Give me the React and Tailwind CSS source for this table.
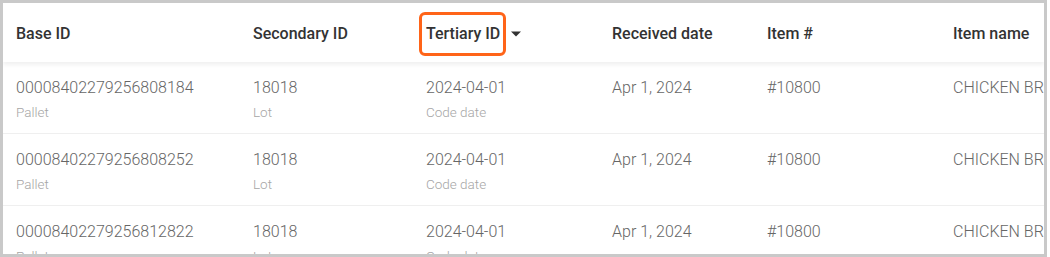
const columns = [
  { label: "Base ID", width: "w-[237px]" },
  { label: "Secondary ID", width: "w-[173px]" },
  { label: "Tertiary ID", width: "w-[186px]", sorted: true },
  { label: "Received date", width: "w-[155px]" },
  { label: "Item #", width: "w-[186px]" },
  { label: "Item name", width: "w-[200px]" },
];

const rows = [
  { base: "00008402279256808184" },
  { base: "00008402279256808252" },
  { base: "00008402279256812822" },
];

const Cell = ({ width, main, sub }) => (
  <div className={`${width} shrink-0 flex flex-col`}>
    <span className="text-[16px] leading-5 text-[#666] font-light whitespace-nowrap">{main}</span>
    {sub && <span className="mt-[4px] text-[13.5px] leading-5 text-[#a6a6a6] font-light">{sub}</span>}
  </div>
);

export default function App() {
  return (
    <div className="w-[1050px] h-[257px] bg-white">
      <div className="w-[1047px] h-[257px] border-[3px] border-[#c9c9c9] bg-white overflow-hidden" style={{ fontFamily: "Roboto, 'Noto Sans', sans-serif" }}>
        {/* header */}
        <div className="relative z-10 h-[59px] flex items-center pt-[2px] pl-[13px] bg-white shadow-[0_3px_4px_rgba(0,0,0,0.06)]">
          {columns.map((col) => (
            <div key={col.label} className={`${col.width} shrink-0 flex items-center`}>
              {col.sorted ? (
                <>
                  <span className="relative text-[16px] font-medium text-[#333] whitespace-nowrap">
                    {col.label}
                    <span className="absolute -left-[7px] -right-[6px] -top-[10px] -bottom-[10px] border-[3px] border-[#ff6418] rounded-[6px]" />
                  </span>
                  <svg className="ml-[11px] w-[10px] h-[6px]" viewBox="0 0 10 5">
                    <path d="M0 0h10L5 5z" fill="#333" />
                  </svg>
                </>
              ) : (
                <span className="text-[16px] font-medium text-[#333] whitespace-nowrap">{col.label}</span>
              )}
            </div>
          ))}
        </div>
        {/* rows */}
        {rows.map((row) => (
          <div key={row.base} className="h-[72px] flex pl-[13px] pt-[16px] border-b border-[#efefef]">
            <Cell width="w-[237px]" main={row.base} sub="Pallet" />
            <Cell width="w-[173px]" main="18018" sub="Lot" />
            <Cell width="w-[186px]" main="2024-04-01" sub="Code date" />
            <Cell width="w-[155px]" main="Apr 1, 2024" />
            <Cell width="w-[186px]" main="#10800" />
            <Cell width="w-[200px]" main="CHICKEN BREAST" />
          </div>
        ))}
      </div>
    </div>
  );
}
